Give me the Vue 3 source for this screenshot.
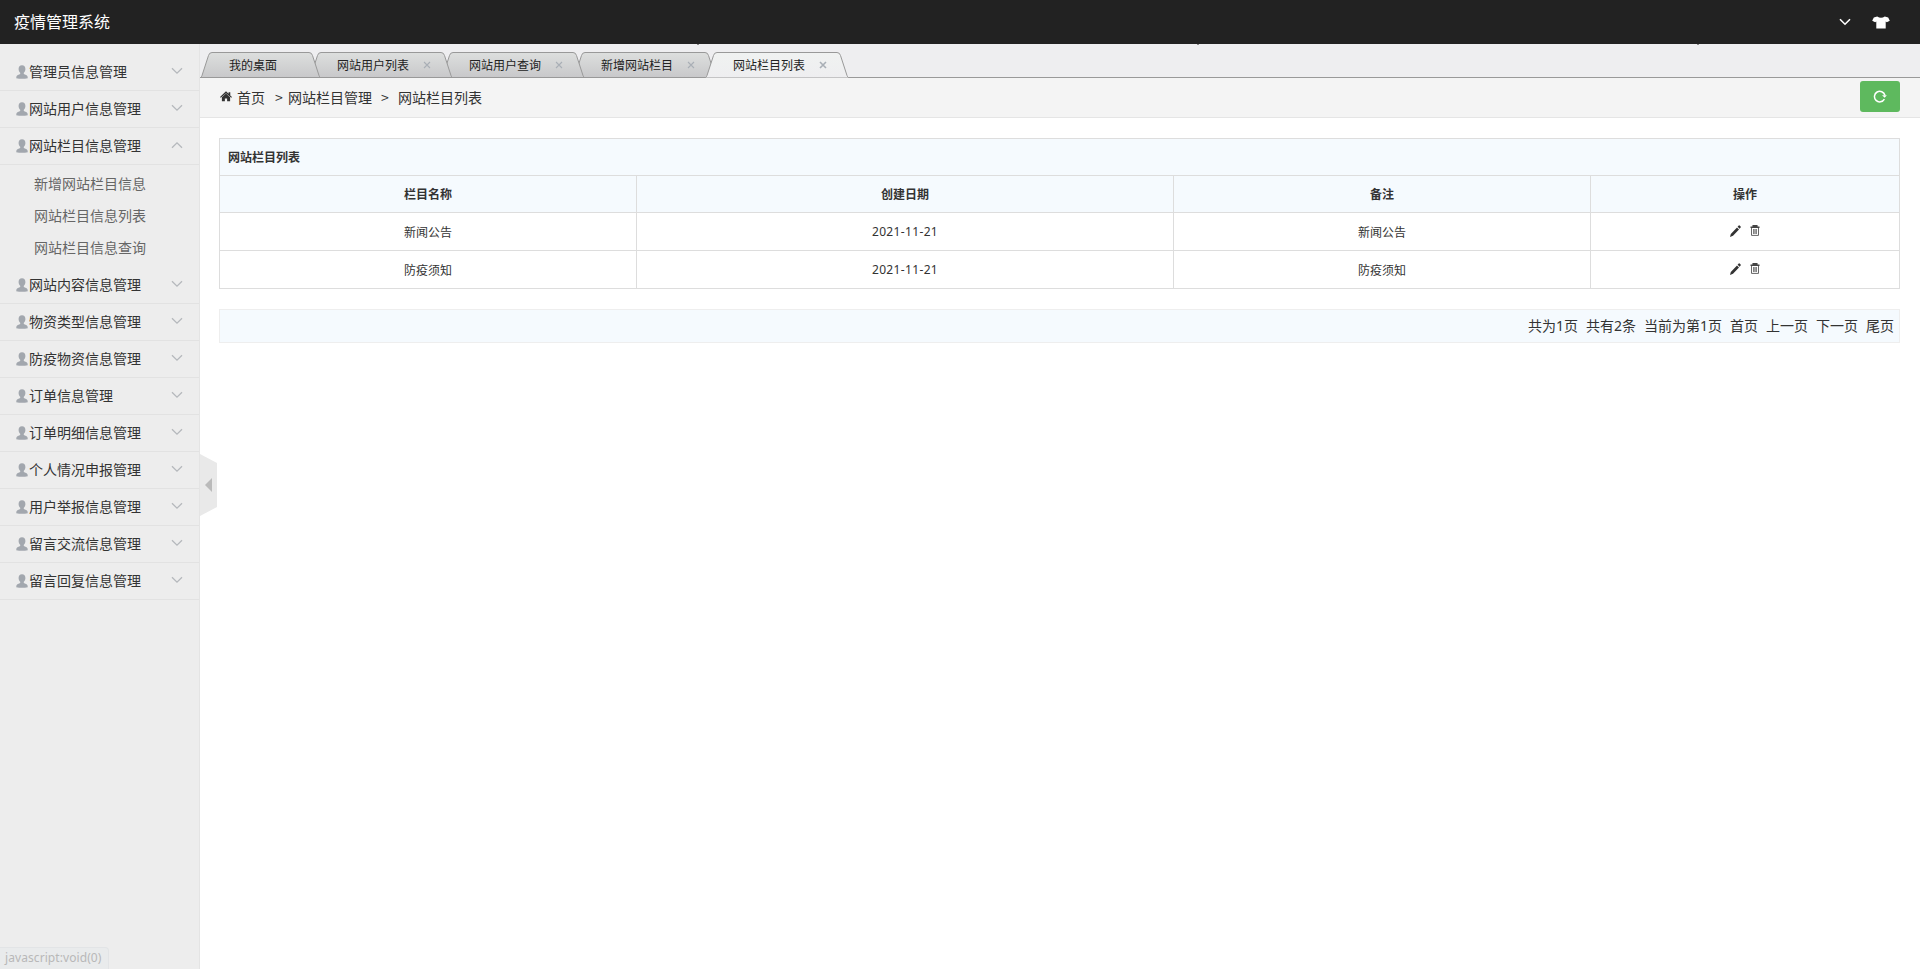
<script setup>
import { ref } from 'vue'

const menus = ref([
  { title: '管理员信息管理' },
  { title: '网站用户信息管理' },
  {
    title: '网站栏目信息管理',
    open: true,
    children: ['新增网站栏目信息', '网站栏目信息列表', '网站栏目信息查询'],
  },
  { title: '网站内容信息管理' },
  { title: '物资类型信息管理' },
  { title: '防疫物资信息管理' },
  { title: '订单信息管理' },
  { title: '订单明细信息管理' },
  { title: '个人情况申报管理' },
  { title: '用户举报信息管理' },
  { title: '留言交流信息管理' },
  { title: '留言回复信息管理' },
])

const tabs = ['我的桌面', '网站用户列表', '网站用户查询', '新增网站栏目', '网站栏目列表']
const activeTab = ref(4)

const rows = [
  { name: '新闻公告', date: '2021-11-21', remark: '新闻公告' },
  { name: '防疫须知', date: '2021-11-21', remark: '防疫须知' },
]

const pager = ['共为1页', '共有2条', '当前为第1页', '首页', '上一页', '下一页', '尾页']

function tabWidth(i) {
  return i === 0 ? 121 : 144
}

// trapezoid outline, open at the bottom
function tabPath(i) {
  const w = tabWidth(i)
  return `M0.5 25.5 Q1.5 25 2 23.5 L8.5 3.5 Q9.3 0.5 12 0.5 H${w - 12} Q${w - 9.3} 0.5 ${w - 8.5} 3.5 L${w - 2} 23.5 Q${w - 1.5} 25 ${w - 0.5} 25.5`
}
</script>

<template>
  <div class="page">
    <header class="header">
      <h1>疫情管理系统</h1>
      <div class="tools">
        <svg class="down" width="12" height="8" viewBox="0 0 12 8"><path d="M1 1.2l5 5 5-5" /></svg>
        <svg class="skin" width="18" height="13" viewBox="0 0 18 13">
          <path d="M5.2.4Q9 3 12.8.4L16.2 1.5 17.8 4.7 14.8 6.2 13.7 5.5V12.5H4.3V5.5L3.2 6.2.2 4.7 1.8 1.5z" />
        </svg>
      </div>
      <i v-for="n in 3" :key="n" class="tick" :class="'tick-' + n"></i>
    </header>

    <div class="body">
      <aside class="sidebar">
        <dl v-for="m in menus" :key="m.title">
          <dt @click="m.open = !m.open">
            <svg class="user" width="12" height="14" viewBox="0 0 12 14">
              <path d="M6 .3C3.6.3 2.5 1.9 2.6 4.2 2.7 6 3.5 7.1 4.2 7.8V9L1.4 10.2Q.2 10.8.2 13.2Q6 14.4 11.8 13.2 11.8 10.8 10.6 10.2L7.8 9V7.8C8.5 7.1 9.3 6 9.4 4.2 9.5 1.9 8.4.3 6 .3z" />
            </svg>
            <span>{{ m.title }}</span>
            <svg class="arrow" :class="{ up: m.open }" width="12" height="8" viewBox="0 0 12 8">
              <path d="M1 1.2l5 5 5-5" />
            </svg>
          </dt>
          <dd v-if="m.open && m.children">
            <a v-for="c in m.children" :key="c">{{ c }}</a>
          </dd>
        </dl>
      </aside>

      <main class="main">
        <div class="collapse">
          <svg width="17" height="62" viewBox="0 0 17 62">
            <path d="M0 0L17 9V53L0 62z" fill="#e9e9e9" />
            <path d="M5 31L12 24V38z" fill="#bababa" />
          </svg>
        </div>

        <nav class="tabs">
          <div
            v-for="(t, i) in tabs"
            :key="t"
            class="tab"
            :class="{ first: i === 0, active: i === activeTab }"
            :style="{ width: tabWidth(i) + 'px', zIndex: i === activeTab ? 20 : 10 - i }"
            @click="activeTab = i"
          >
            <svg class="shape" :width="tabWidth(i)" height="26">
              <defs>
                <linearGradient :id="'tab' + i" x1="0" y1="0" x2="0" y2="1">
                  <stop offset="0" :stop-color="i === activeTab ? '#f0f2f1' : '#dddfde'" />
                  <stop offset="1" :stop-color="i === activeTab ? '#eeeef0' : '#c8c8ca'" />
                </linearGradient>
              </defs>
              <path :d="tabPath(i)" :fill="`url(#tab${i})`" stroke="#999" />
              <path v-if="i !== activeTab" :d="`M0 25.5H${tabWidth(i)}`" stroke="#999" />
            </svg>
            <span>{{ t }}</span>
            <svg v-if="i" class="close" width="8" height="8" viewBox="0 0 8 8"><path d="M1 1l6 6M7 1l-6 6" /></svg>
          </div>
        </nav>

        <div class="crumbs">
          <svg class="home" width="12" height="11" viewBox="0 0 14 12">
            <path d="M7 0L10 2.8V1H12V4.7L14 6.6 13.1 7.5 7 2.1.9 7.5 0 6.6z" />
            <path d="M7 2.6L11.8 7V11.5H8.3V8.2H5.7V11.5H2.2V7z" />
          </svg>
          <span class="c1">首页</span>
          <span class="gt g1">&gt;</span>
          <span>网站栏目管理</span>
          <span class="gt g2">&gt;</span>
          <span>网站栏目列表</span>
          <button class="refresh" title="刷新">
            <svg width="14" height="13" viewBox="0 0 14 13">
              <path d="M11.4 9.2A5.3 5.3 0 1 1 11.9 5.2" fill="none" stroke="#fff" stroke-width="1.5" />
              <path d="M9 5.2H13.8L11.7 7.8z" fill="#fff" />
            </svg>
          </button>
        </div>

        <section class="content">
          <table>
            <colgroup>
              <col class="col-name" />
              <col class="col-date" />
              <col class="col-remark" />
              <col />
            </colgroup>
            <thead>
              <tr>
                <th class="caption" colspan="4">网站栏目列表</th>
              </tr>
              <tr>
                <th>栏目名称</th>
                <th>创建日期</th>
                <th>备注</th>
                <th>操作</th>
              </tr>
            </thead>
            <tbody>
              <tr v-for="r in rows" :key="r.name">
                <td>{{ r.name }}</td>
                <td class="date">{{ r.date }}</td>
                <td>{{ r.remark }}</td>
                <td>
                  <div class="ops">
                    <svg width="11" height="12" viewBox="0 0 11 12">
                      <path d="M0 12L.8 9 7 2.4 9 4.4 3 10.8zM7.6 1.7L8.7.6Q9.3.1 9.9.7L10.6 1.4Q11.1 2 10.6 2.6L9.6 3.7z" fill="#333" />
                    </svg>
                    <svg width="10" height="11" viewBox="0 0 10 11">
                      <path d="M.5 2.2H9.5M3.2 2V.8H6.8V2" fill="none" stroke="#444" stroke-width="1.5" />
                      <path d="M1.5 3V10.4H8.5V3M3.7 4V9M5 4V9M6.3 4V9" fill="none" stroke="#666" stroke-width="1" />
                    </svg>
                  </div>
                </td>
              </tr>
            </tbody>
          </table>

          <div class="pager">
            <a v-for="p in pager" :key="p">{{ p }}</a>
          </div>
        </section>
      </main>
    </div>

    <div class="status">javascript:void(0)</div>
  </div>
</template>

<style>
body {
  margin: 0;
  overflow: hidden;
}
</style>

<style scoped>
.page {
  position: relative;
  display: flex;
  flex-direction: column;
  height: 100vh;
  font-family: 'Noto Sans CJK SC', 'Microsoft YaHei', sans-serif;
  font-size: 14px;
  color: #333;
  background: #fff;
}

svg {
  display: block;
  flex: none;
}

.header {
  position: relative;
  display: flex;
  flex: none;
  align-items: center;
  justify-content: space-between;
  box-sizing: border-box;
  height: 44px;
  padding: 0 30px 0 14px;
  background: #222;
}

.header h1 {
  margin: 0;
  padding-bottom: 2px;
  font-size: 16px;
  font-weight: normal;
  line-height: 42px;
  color: #fff;
}

.tools {
  display: flex;
  align-items: center;
  gap: 21px;
}

.down path {
  fill: none;
  stroke: #fff;
  stroke-width: 1.6;
}

.skin path {
  fill: #fff;
}

.tick {
  position: absolute;
  top: 44px;
  width: 2px;
  height: 1px;
  background: #888;
  z-index: 30;
}

.tick-1 {
  left: 697px;
}

.tick-2 {
  left: 1197px;
}

.tick-3 {
  left: 1697px;
}

.body {
  display: flex;
  flex: 1;
  min-height: 0;
}

.sidebar {
  flex: none;
  box-sizing: border-box;
  width: 200px;
  padding-top: 10px;
  border-right: 1px solid #e4e4e4;
  background: #ededed;
}

.sidebar dl {
  margin: 0;
}

.sidebar dt {
  display: flex;
  align-items: center;
  box-sizing: border-box;
  height: 37px;
  padding: 0 16px;
  border-bottom: 1px solid #e2e2e2;
  line-height: 34px;
  cursor: pointer;
}

.sidebar dt span {
  flex: 1;
  margin-left: 1px;
  padding-bottom: 2px;
}

.user path {
  fill: #a2a7ae;
}

.arrow {
  position: relative;
  top: -1px;
}

.arrow.up {
  transform: rotate(180deg);
}

.arrow path {
  fill: none;
  stroke: #b5b8bc;
  stroke-width: 1.3;
}

.sidebar dd {
  margin: 0;
  padding: 2px 0 4px 34px;
}

.sidebar dd a {
  display: block;
  line-height: 32px;
  color: #666;
}

.main {
  position: relative;
  flex: 1;
  min-width: 0;
}

.collapse {
  position: absolute;
  left: 0;
  top: 410px;
  cursor: pointer;
}

.tabs {
  position: relative;
  display: flex;
  align-items: flex-end;
  height: 34px;
  background: #eeeef0;
  box-shadow: inset 0 -1px #999;
}

.tab {
  position: relative;
  flex: none;
  display: flex;
  align-items: center;
  box-sizing: border-box;
  height: 26px;
  margin-left: -12px;
  padding-left: 28px;
  font-size: 12px;
  color: #222;
  cursor: pointer;
}

.tab.first {
  margin-left: 0;
  padding-left: 29px;
}

.shape {
  position: absolute;
  left: 0;
  top: 0;
}

.tab span {
  position: relative;
  padding-bottom: 2px;
}

.close {
  position: relative;
  margin-left: 14px;
}

.close path {
  fill: none;
  stroke: #a9afb6;
  stroke-width: 1.1;
}

.tab.active .close path {
  stroke-width: 1.6;
}

.crumbs {
  display: flex;
  align-items: center;
  box-sizing: border-box;
  height: 40px;
  padding: 0 20px 2px;
  border-bottom: 1px solid #e5e5e5;
  background: #f4f4f4;
}

.home path {
  fill: #333;
}

.c1 {
  margin-left: 5px;
}

.g1 {
  margin: 0 5px 0 10px;
}

.g2 {
  margin: 0 9px;
}

.gt {
  width: 8px;
}

.refresh {
  display: flex;
  align-items: center;
  justify-content: center;
  width: 40px;
  height: 31px;
  margin: 0 0 0 auto;
  padding: 0;
  border: none;
  border-radius: 3px;
  background: #5eb95e;
  cursor: pointer;
}

.content {
  padding: 20px 20px 0 19px;
}

table {
  width: 100%;
  table-layout: fixed;
  border-collapse: separate;
  border-spacing: 0;
  border-top: 1px solid #ddd;
  border-left: 1px solid #ddd;
  font-size: 12px;
}

.col-name {
  width: 417px;
}

.col-date {
  width: 537px;
}

.col-remark {
  width: 417px;
}

th,
td {
  box-sizing: border-box;
  padding: 0 8px;
  border-right: 1px solid #ddd;
  border-bottom: 1px solid #ddd;
  text-align: center;
}

th {
  height: 37px;
  background: #f5fafe;
  font-weight: bold;
  line-height: 20px;
}

th.caption {
  text-align: left;
}

td {
  height: 38px;
  line-height: 20px;
}

.date {
  font-family: 'Noto Sans', sans-serif;
  letter-spacing: 0.35px;
}

.ops {
  display: flex;
  align-items: center;
  justify-content: center;
  gap: 9px;
  padding-bottom: 2px;
}

.pager {
  display: flex;
  justify-content: flex-end;
  gap: 8px;
  box-sizing: border-box;
  height: 34px;
  margin-top: 20px;
  padding-right: 5px;
  border: 1px solid #eee;
  background: #f5fafe;
  font-family: 'Noto Sans', 'Noto Sans CJK SC', sans-serif;
  line-height: 31px;
}

.status {
  position: absolute;
  left: 0;
  bottom: 0;
  box-sizing: border-box;
  width: 109px;
  height: 22px;
  padding-left: 5px;
  border: 1px solid #e2e4e6;
  border-width: 1px 1px 0 0;
  border-top-right-radius: 4px;
  background: #e9ebec;
  font-family: 'Noto Sans', sans-serif;
  font-size: 12px;
  letter-spacing: 0.08px;
  line-height: 20px;
  color: #b8b8b8;
}
</style>
